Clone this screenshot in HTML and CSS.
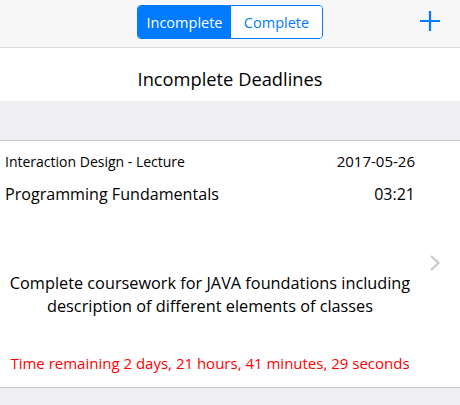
FILE: index.html
```html
<!DOCTYPE html>
<html>
<head>
<meta charset="utf-8">
<link rel="stylesheet" href="styles.css">
</head>
<body>
<div class="navbar">
  <div class="segmented">
    <div class="seg active">Incomplete</div>
    <div class="seg">Complete</div>
  </div>
  <svg class="plus" width="20" height="20" viewBox="0 0 20 20"><path d="M10 0V20M0 10H20" stroke="#007aff" stroke-width="2.2" fill="none"/></svg>
</div>
<div class="title">Incomplete Deadlines</div>
<div class="gap"></div>
<div class="cell">
  <div class="row row1"><span>Interaction Design - Lecture</span><span>2017-05-26</span></div>
  <div class="row row2"><span>Programming Fundamentals</span><span class="time">03:21</span></div>
  <div class="desc">Complete coursework for JAVA foundations including<br>description of different elements of classes</div>
  <div class="remaining">Time remaining 2 days, 21 hours, 41 minutes, 29 seconds</div>
  <svg class="chevron" width="10" height="16" viewBox="0 0 10 16"><path d="M1 1L8.5 8L1 15" stroke="#c7c7cc" stroke-width="2" fill="none"/></svg>
</div>
<div class="gap2"></div>
</body>
</html>
```
FILE: styles.css
```css
* { box-sizing: border-box; }
body {
  margin: 0;
  font-family: "Open Sans", "Noto Sans", sans-serif;
  background: #efeff4;
  color: #000;
  width: 460px;
  height: 405px;
  overflow: hidden;
}
.navbar {
  height: 48px;
  background: #f7f7f7;
  border-bottom: 1px solid #dcdcdc;
  display: flex;
  justify-content: center;
  align-items: flex-start;
  position: relative;
}
.segmented {
  margin-top: 5px;
  display: flex;
  border: 1px solid #007aff;
  border-radius: 4px;
  overflow: hidden;
  height: 34px;
}
.seg {
  font-size: 14.5px;
  color: #007aff;
  display: flex;
  align-items: center;
  justify-content: center;
  background: #fff;
}
.seg.active { background: #007aff; color: #fff; width: 93px; }
.seg:not(.active) { width: 91px; }
.plus { position: absolute; left: 420px; top: 11px; }
.title {
  height: 53px;
  background: #fff;
  text-align: center;
  font-size: 18.3px;
  padding-top: 18px;
}
.gap {
  height: 40px;
  border-bottom: 1px solid #c8c7cc;
}
.cell {
  background: #fff;
  height: 247px;
  border-bottom: 1px solid #c8c7cc;
  position: relative;
  padding: 0 45px 0 5px;
}
.row { display: flex; justify-content: space-between; align-items: baseline; }
.row1 { font-size: 14px; padding-top: 10px; height: 42px; }
.row1 span:last-child { font-size: 15px; }
.row2 { font-size: 16.1px; height: 30px; }
.row2 .time { font-size: 16px; }
.desc {
  text-align: center;
  font-size: 16.3px;
  line-height: 23px;
  margin-top: 59px;
  margin-left: -4px;
  width: 418px;
}
.remaining {
  color: #ff0000;
  text-align: center;
  font-size: 15px;
  margin-top: 35px;
  width: 418px;
  margin-left: -4px;
}
.chevron { position: absolute; left: 430px; top: 114px; }
```
